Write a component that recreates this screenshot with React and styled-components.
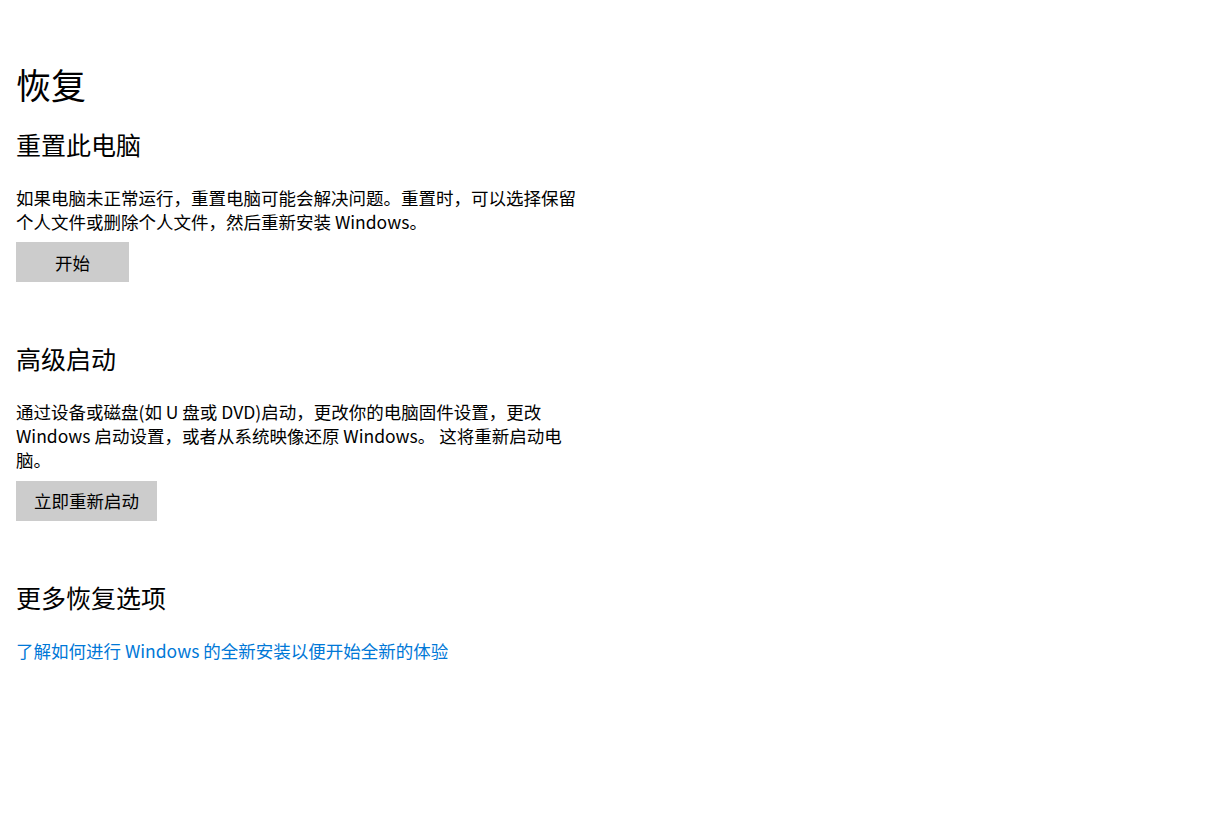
import React from 'react';
import styled, { createGlobalStyle } from 'styled-components';

const GlobalStyle = createGlobalStyle`
    html, body {
        margin: 0;
        padding: 0;
        background: #ffffff;
    }
    body {
        font-family: "Segoe UI", "Noto Sans CJK SC", sans-serif;
        color: #000000;
    }
`;

const Page = styled.div`
    width: 1226px;
    height: 817px;
    box-sizing: border-box;
    padding: 58px 16px 0;
    background: #ffffff;
`;

const Title = styled.h1`
    font-size: 35px;
    font-weight: 400;
    line-height: 52px;
    margin: 0;
`;

const Section = styled.section`
    margin-top: ${props => props.$gap || 0}px;
    display: flex;
    flex-direction: column;
    align-items: flex-start;
`;

const SectionTitle = styled.h2`
    font-size: 25px;
    font-weight: 400;
    line-height: 36px;
    margin: 0;
`;

const Description = styled.p`
    width: 562px;
    font-size: 17.5px;
    line-height: 23.7px;
    margin: 24px 0 0;
`;

const Button = styled.button`
    min-width: 113px;
    height: 40px;
    margin-top: 9px;
    padding: 0 18px;
    border: none;
    background: #cccccc;
    color: #000000;
    font-family: inherit;
    font-size: 17.5px;
    cursor: pointer;
`;

const Link = styled.a`
    display: block;
    margin-top: 24px;
    font-size: 17.5px;
    line-height: 24px;
    color: #0078d7;
    text-decoration: none;
    cursor: pointer;
`;

const App = () => {
    return (
        <>
            <GlobalStyle />
            <Page>
                <Title>恢复</Title>
                <Section $gap={16}>
                    <SectionTitle>重置此电脑</SectionTitle>
                    <Description>
                        如果电脑未正常运行，重置电脑可能会解决问题。重置时，可以选择保留个人文件或删除个人文件，然后重新安装 Windows。
                    </Description>
                    <Button>开始</Button>
                </Section>
                <Section $gap={58}>
                    <SectionTitle>高级启动</SectionTitle>
                    <Description>
                        通过设备或磁盘(如 U 盘或 DVD)启动，更改你的电脑固件设置，更改 Windows 启动设置，或者从系统映像还原 Windows。 这将重新启动电脑。
                    </Description>
                    <Button>立即重新启动</Button>
                </Section>
                <Section $gap={58}>
                    <SectionTitle>更多恢复选项</SectionTitle>
                    <Link>了解如何进行 Windows 的全新安装以便开始全新的体验</Link>
                </Section>
            </Page>
        </>
    );
};

export default App;
